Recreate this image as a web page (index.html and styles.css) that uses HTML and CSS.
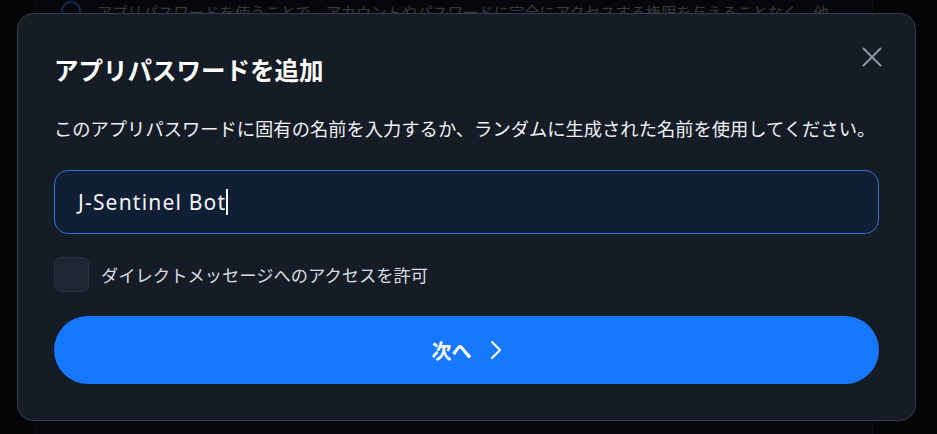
FILE: index.html
```html
<!DOCTYPE html>
<html lang="ja">
<head>
<meta charset="utf-8">
<title>アプリパスワードを追加</title>
<link rel="stylesheet" href="styles.css">
</head>
<body>
<div class="page">
  <div class="bg-card">
    <div class="bg-row">
      <span class="bg-icon"></span>
      <p class="bg-text">アプリパスワードを使うことで、アカウントやパスワードに完全にアクセスする権限を与えることなく、他</p>
    </div>
  </div>
</div>
<div class="overlay">
  <div class="dialog" role="dialog">
    <button class="close" aria-label="閉じる">
      <svg width="20" height="20" viewBox="0 0 20 20" fill="none" stroke="currentColor" stroke-width="2" stroke-linecap="round"><path d="M1.5 1.5L18.5 18.5M18.5 1.5L1.5 18.5"/></svg>
    </button>
    <h2 class="title">アプリパスワードを追加</h2>
    <p class="desc">このアプリパスワードに固有の名前を入力するか、ランダムに生成された名前を使用してください。</p>
    <div class="field"><span class="value">J-Sentinel Bot</span><span class="caret"></span></div>
    <label class="check"><span class="box"></span><span class="check-label">ダイレクトメッセージへのアクセスを許可</span></label>
    <button class="next"><span>次へ</span>
      <svg width="12" height="20" viewBox="0 0 12 20" fill="none" stroke="currentColor" stroke-width="2.2" stroke-linecap="round" stroke-linejoin="round"><path d="M2 2L10 10L2 18"/></svg>
    </button>
  </div>
</div>
</body>
</html>
```
FILE: styles.css
```css
* { box-sizing: border-box; }
html, body { margin: 0; height: 100%; }
body {
  background: #0c1017;
  font-family: "Noto Sans CJK JP", "Noto Sans", sans-serif;
  overflow: hidden;
}
.page { padding: 0 64px 0 35px; }
.bg-card {
  border-left: 1px solid #2a3240;
  border-right: 1px solid #2a3240;
  height: 434px;
  background: #121821;
}
.bg-row {
  display: flex;
  align-items: center;
  gap: 16px;
  padding-left: 25px;
}
.bg-icon {
  width: 20px; height: 20px;
  border: 2px solid #3b82f6;
  border-radius: 50%;
  flex: none;
}
.bg-text {
  margin: 0;
  color: #a9b1bd;
  font-size: 15.3px;
  line-height: 22px;
  white-space: nowrap;
}
.overlay {
  position: fixed;
  inset: 0;
  background: rgba(0, 0, 0, 0.68);
  padding: 13px 21px 13px 17px;
  display: flex;
  align-items: stretch;
}
.dialog {
  position: relative;
  flex: none;
  width: 899px;
  background: #161c26;
  border: 1px solid #353d4a;
  border-radius: 16px;
  padding: 38px 36px 36px 36px;
  display: flex;
  flex-direction: column;
}
.close {
  position: absolute;
  top: 33px;
  right: 33px;
  background: none;
  border: 0;
  padding: 0;
  color: #8e99a8;
  width: 20px; height: 20px;
  display: flex;
}
.title {
  margin: 0;
  color: #ffffff;
  font-size: 24.5px;
  font-weight: 700;
  line-height: 35px;
}
.desc {
  margin: 27px 0 0;
  color: #eef1f5;
  font-size: 18.3px;
  line-height: 28px;
  white-space: nowrap;
}
.field {
  margin-top: 28px;
  height: 64px;
  border: 1px solid #2f6fd6;
  border-radius: 14px;
  background: #111f34;
  display: flex;
  align-items: center;
  padding-left: 23px;
}
.value {
  font-family: "Noto Sans", sans-serif;
  color: #f3f5f8;
  font-size: 21px;
  letter-spacing: 1.2px;
}
.caret {
  width: 1.5px;
  height: 26px;
  background: #f3f5f8;
}
.check {
  margin-top: 23px;
  display: flex;
  align-items: center;
  gap: 12px;
}
.box {
  width: 35px; height: 35px;
  border-radius: 7px;
  background: #1d2733;
  border: 1px solid #2b3542;
}
.check-label {
  color: #d8dde4;
  font-size: 17.3px;
  line-height: 24px;
}
.next {
  margin-top: 24px;
  height: 68px;
  border: 0;
  border-radius: 34px;
  background: #1677ff;
  color: #ffffff;
  font-family: inherit;
  font-size: 20px;
  font-weight: 700;
  display: flex;
  align-items: center;
  justify-content: center;
  gap: 18px;
  padding: 0;
}
```
